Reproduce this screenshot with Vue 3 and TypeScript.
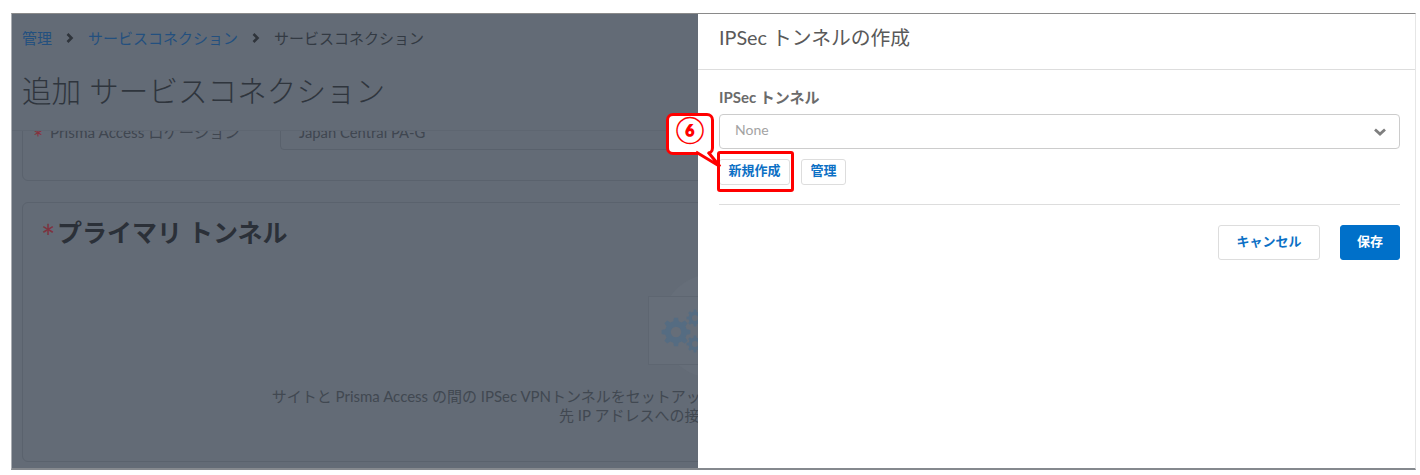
<script setup lang="ts">
const crumbs = ['管理', 'サービスコネクション']

function gear(cx: number, cy: number, r: number): string {
  const teeth = 8
  const inner = r * 0.76
  const hole = r * 0.36
  const pts: string[] = []
  for (let i = 0; i < teeth; i++) {
    const a = (i / teeth) * Math.PI * 2
    const s = Math.PI / teeth
    const list: [number, number][] = [
      [inner, a - s * 0.62],
      [r, a - s * 0.36],
      [r, a + s * 0.36],
      [inner, a + s * 0.62],
    ]
    for (const [rad, ang] of list) {
      pts.push(`${(cx + rad * Math.cos(ang)).toFixed(2)} ${(cy + rad * Math.sin(ang)).toFixed(2)}`)
    }
  }
  return `M${pts.join('L')}ZM${cx - hole} ${cy}a${hole} ${hole} 0 1 0 ${hole * 2} 0a${hole} ${hole} 0 1 0 ${-hole * 2} 0Z`
}
const gears = [gear(15, 35, 14.5), gear(34, 21, 8.5), gear(34, 47, 8.5)]
</script>

<template>
  <div class="frame">
    <main class="page">
      <header class="page-head">
        <nav class="crumbs">
          <template v-for="c in crumbs" :key="c">
            <a class="crumb-link">{{ c }}</a>
            <svg class="chev" width="10" height="12" viewBox="0 0 10 12"><path d="M2.500 2 6.500 6l-4 4" fill="none" stroke="#2f343b" stroke-width="2.600" /></svg>
          </template>
          <span>サービスコネクション</span>
        </nav>
        <h1 class="page-title">追加 サービスコネクション</h1>
      </header>
      <div class="scroller">
        <section class="card card-location">
          <div class="loc-row">
            <label class="loc-label"><span class="req">*</span>Prisma Access ロケーション</label>
            <div class="loc-input">Japan Central PA-G</div>
          </div>
        </section>
        <section class="card card-tunnel">
          <h2 class="tunnel-title"><span class="req-big">*</span>プライマリ トンネル</h2>
          <div class="empty">
            <div class="empty-art">
              <div class="circle"></div>
              <div class="art-box">
                <svg width="60" height="67" viewBox="0 0 60 67">
                  <path v-for="(g, i) in gears" :key="i" :d="g" fill="#556c82" fill-rule="evenodd" />
                </svg>
              </div>
            </div>
            <p class="empty-text">サイトと Prisma Access の間の IPSec VPNトンネルをセットアップして、サイトのデバイスと Prisma Accessの接続を確立して、の宛<br />先 IP アドレスへの接続を有効にしてください.</p>
          </div>
        </section>
      </div>
    </main>

    <aside class="drawer">
      <div class="drawer-head">IPSec トンネルの作成</div>
      <div class="drawer-body">
        <label class="field-label">IPSec トンネル</label>
        <div class="select">
          <span class="select-value">None</span>
          <svg width="14" height="10" viewBox="0 0 14 10"><path d="M2 2.500 7 7l5-4.500" fill="none" stroke="#7f7f7f" stroke-width="2.800" /></svg>
        </div>
        <div class="inline-actions">
          <button class="btn btn-new">新規作成</button>
          <button class="btn btn-manage">管理</button>
        </div>
        <div class="footer-actions">
          <button class="btn btn-cancel">キャンセル</button>
          <button class="btn btn-save">保存</button>
        </div>
      </div>
    </aside>

    <div class="highlight"></div>
    <div class="callout">
      <svg class="callout-tail" width="32" height="20" viewBox="0 0 32 20">
        <path d="M5 0 29 14.500 17 0" fill="#fff" stroke="#f00" stroke-width="3" stroke-linejoin="miter" />
      </svg>
      <span class="callout-num">⑥</span>
    </div>
  </div>
</template>

<style>
html, body { margin: 0; background: #fff; }
</style>

<style scoped>
.frame {
  position: relative;
  box-sizing: border-box;
  width: 1405px;
  height: 457px;
  margin: 13px 0 0 11px;
  background: #636b76;
  border-top: 1px solid #8a8a8a;
  border-bottom: 2px solid #85898e;
  border-left: 1px solid #a9adb2;
  border-right: 1px solid #e6e6e6;
  overflow: hidden;
  font-family: Lato, "Noto Sans CJK JP", sans-serif;
}
.page { display: flex; flex-direction: column; height: 100%; }
.page-head {
  flex: none;
  box-sizing: border-box;
  height: 117px;
  padding: 13px 0 0 10px;
  border-bottom: 1px solid #5e6671;
}
.crumbs { display: flex; align-items: center; gap: 12px; font-size: 15px; line-height: 22px; color: #333a43; }
.crumb-link { color: #23507f; }
.chev { flex: none; margin: 0 1px; }
.page-title { margin: 23px 0 0; font-size: 29.600px; line-height: 38px; font-weight: 300; color: #2f353d; white-space: nowrap; }
.scroller { flex: 1; min-height: 0; overflow: hidden; padding: 0 11px 0 10px; }
.card {
  box-sizing: border-box;
  border: 1px solid #5a626d;
  border-radius: 6px;
}
.card-location { height: 74px; margin-top: -24px; }
.loc-row { display: flex; align-items: flex-start; padding: 6px 0 0 10px; }
.loc-label { display: flex; width: 247px; flex: none; font-size: 15.300px; line-height: 36px; color: #3f4650; white-space: nowrap; }
.req { width: 17px; flex: none; padding-top: 5px; font-size: 24px; color: #86333f; }
.loc-input {
  flex: 1;
  box-sizing: border-box;
  height: 36px;
  margin-right: 20px;
  padding-left: 18px;
  border: 1px solid #59616c;
  border-radius: 4px;
  font-size: 14.800px;
  line-height: 35px;
  color: #3f4650;
}
.card-tunnel { height: 260px; margin-top: 21px; position: relative; }
.tunnel-title { display: flex; margin: 11px 0 0 18px; font-size: 25px; line-height: 36px; font-weight: 700; color: #2b3038; white-space: nowrap; }
.req-big { width: 16px; flex: none; padding-top: 5px; color: #7d3340; font-size: 34px; font-weight: 400; line-height: 36px; }
.empty { display: flex; flex-direction: column; align-items: center; }
.empty-art { position: relative; width: 130px; height: 90px; margin-top: 33px; }
.circle { position: absolute; left: 13px; top: -14px; width: 104px; height: 104px; border-radius: 50%; background: #666e79; }
.art-box {
  position: absolute;
  left: 0; top: 8px;
  box-sizing: border-box;
  width: 130px; height: 69px;
  padding: 0 0 0 12px;
  border: 1px solid #5e6671;
  background: #666e79;
}
.empty-text {
  margin: 9px 0 0;
  text-align: center;
  font-size: 15px;
  line-height: 19px;
  color: #414851;
  white-space: nowrap;
}
.drawer {
  position: absolute;
  top: 0; right: 0; bottom: 0;
  width: 717px;
  background: #fff;
  color: #555;
}
.drawer-head {
  box-sizing: border-box;
  height: 56px;
  padding: 10px 0 0 21px;
  border-bottom: 1px solid #ddd;
  font-size: 19.800px;
  line-height: 26px;
  color: #595959;
}
.drawer-body { padding: 17px 15px 0 21px; }
.field-label { display: block; font-size: 15px; line-height: 20px; font-weight: 700; color: #6b6b6b; }
.select {
  box-sizing: border-box;
  height: 35px;
  margin-top: 7px;
  padding: 0 12px 0 15px;
  display: flex;
  align-items: center;
  justify-content: space-between;
  border: 1px solid #ccc;
  border-radius: 4px;
  font-size: 14px;
  color: #a3a3a3;
}
.select-value { padding-bottom: 4px; }
.inline-actions {
  display: flex;
  gap: 11px;
  margin-top: 10px;
  padding-bottom: 19px;
  border-bottom: 1px solid #ddd;
}
.btn {
  box-sizing: border-box;
  border: 1px solid #ddd;
  border-radius: 3px;
  background: #fff;
  color: #0c70c5;
  font-family: inherit;
  font-weight: 700;
  padding: 0;
  cursor: pointer;
}
.btn-new { width: 71px; height: 26px; padding-bottom: 8px; font-size: 13px; }
.btn-manage { width: 45px; height: 26px; padding-bottom: 8px; font-size: 13px; }
.footer-actions { display: flex; justify-content: flex-end; gap: 20px; margin-top: 20px; }
.btn-cancel { width: 102px; height: 35px; padding-bottom: 4px; font-size: 13px; }
.btn-save { width: 60px; height: 35px; padding-bottom: 4px; font-size: 13px; background: #0070c9; border-color: #0070c9; color: #fff; }
.highlight {
  position: absolute;
  left: 705px; top: 137px;
  box-sizing: border-box;
  width: 77px; height: 41px;
  border: 3px solid #f00;
  border-radius: 3px;
}
.callout {
  position: absolute;
  left: 654px; top: 99px;
  box-sizing: border-box;
  width: 48px; height: 42px;
  border: 3px solid #f00;
  border-radius: 7px;
  background: #fff;
  display: flex;
  align-items: center;
  justify-content: center;
}
.callout-tail { position: absolute; left: 22px; top: 36px; overflow: visible; }
.callout-num { margin-top: -10px; font-size: 26px; line-height: 24px; font-weight: 700; color: #f00; }
</style>
